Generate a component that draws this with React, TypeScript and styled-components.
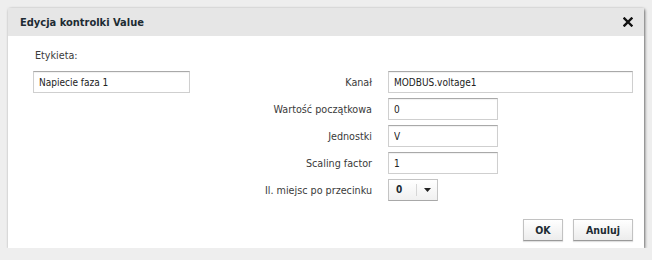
import React from 'react';
import styled, { createGlobalStyle } from 'styled-components';

const GlobalStyle = createGlobalStyle`
    html, body {
        margin: 0;
        padding: 0;
        background: #eeeeee;
    }
    body {
        font-family: "DejaVu Sans Condensed", "DejaVu Sans", Tahoma, sans-serif;
        font-size: 10px;
        color: #333;
    }
`;

const Page = styled.div`
    padding: 8px 8px 0 8px;
    width: 636px;
`;

const Dialog = styled.div`
    background: #fff;
    border-radius: 2px 2px 0 0;
    box-shadow: 1px 1px 3px rgba(0, 0, 0, 0.55), 0 0 1px rgba(0, 0, 0, 0.12);
`;

const Header = styled.div`
    height: 28px;
    background: #e6e6e6;
    display: flex;
    align-items: center;
    justify-content: space-between;
    padding: 0 11px 0 12px;
`;

const Title = styled.div`
    font-weight: bold;
    font-size: 11px;
    color: #1d2b33;
`;

const Close = styled.button`
    border: 0;
    background: none;
    padding: 0;
    width: 10px;
    height: 10px;
    display: flex;
    cursor: pointer;
`;

const Body = styled.div`
    display: grid;
    grid-template-columns: 157px 1fr 245px;
    grid-template-rows: 17px repeat(5, 22px) auto;
    row-gap: 5px;
    column-gap: 16px;
    padding: 13px 11px 7px 25px;
    & > :first-child {
        grid-column: 1 / -1;
    }
`;

const Label = styled.div<{ align?: 'left' | 'right' }>`
    display: flex;
    align-items: center;
    justify-content: ${p => (p.align === 'right' ? 'flex-end' : 'flex-start')};
    padding-left: ${p => (p.align === 'right' ? 0 : '2px')};
    font-size: 10.7px;
    color: #3a3a3a;
    white-space: nowrap;
`;

const TopLabel = styled(Label)`
    align-items: flex-start;
    padding-top: 0;
`;

const Input = styled.input<{ w?: number }>`
    box-sizing: border-box;
    width: ${p => (p.w ? `${p.w}px` : '100%')};
    height: 22px;
    border: 1px solid #cfcfcf;
    border-top-color: #a9a9a9;
    box-shadow: inset 0 1px 1px rgba(0, 0, 0, 0.06);
    padding: 0 5px;
    font: inherit;
    color: #222;
    outline: none;
`;

const Empty = styled.div``;

const Select = styled.div`
    box-sizing: border-box;
    width: 50px;
    height: 22px;
    display: flex;
    align-items: center;
    border: 1px solid #c4c4c4;
    border-bottom-color: #a8a8a8;
    background: linear-gradient(#ffffff, #f0f0f0);
    font-weight: bold;
    color: #1d2b33;
`;

const SelectValue = styled.div`
    width: 28px;
    padding-left: 7px;
    box-sizing: border-box;
    border-right: 1px solid #d6d6d6;
    height: 12px;
    line-height: 12px;
`;

const SelectArrow = styled.div`
    flex: 1;
    display: flex;
    justify-content: center;
`;

const Buttons = styled.div`
    grid-column: 1 / -1;
    display: flex;
    justify-content: flex-end;
    gap: 10px;
    margin-top: 13px;
`;

const Button = styled.button<{ w: number }>`
    width: ${p => p.w}px;
    height: 22px;
    border: 1px solid #c2c2c2;
    border-bottom-color: #9a9a9a;
    background: linear-gradient(#ffffff, #ececec);
    box-shadow: 0 1px 1px rgba(0, 0, 0, 0.12);
    font: inherit;
    font-size: 10.5px;
    font-weight: bold;
    color: #1d2b33;
    padding: 0;
`;

const fields = [
    { label: 'Wartość początkowa', value: '0' },
    { label: 'Jednostki', value: 'V' },
    { label: 'Scaling factor', value: '1' },
];

export default function App() {
    return (
        <Page>
            <GlobalStyle />
            <Dialog>
                <Header>
                    <Title>Edycja kontrolki Value</Title>
                    <Close aria-label="close">
                        <svg width="10" height="10" viewBox="0 0 10 10">
                            <path d="M1.5 1.5 L8.5 8.5 M8.5 1.5 L1.5 8.5" stroke="#111" strokeWidth="2.4" strokeLinecap="square" />
                        </svg>
                    </Close>
                </Header>
                <Body>
                    <TopLabel>Etykieta:</TopLabel>

                    <Input defaultValue="Napiecie faza 1" />
                    <Label align="right">Kanał</Label>
                    <Input defaultValue="MODBUS.voltage1" />

                    {fields.map(f => (
                        <React.Fragment key={f.label}>
                            <Empty />
                            <Label align="right">{f.label}</Label>
                            <Input w={110} defaultValue={f.value} />
                        </React.Fragment>
                    ))}

                    <Empty />
                    <Label align="right">Il. miejsc po przecinku</Label>
                    <Select>
                        <SelectValue>0</SelectValue>
                        <SelectArrow>
                            <svg width="7" height="4" viewBox="0 0 7 4">
                                <path d="M0 0 H7 L3.5 4 Z" fill="#222" />
                            </svg>
                        </SelectArrow>
                    </Select>

                    <Buttons>
                        <Button w={40}>OK</Button>
                        <Button w={60}>Anuluj</Button>
                    </Buttons>
                </Body>
            </Dialog>
        </Page>
    );
}
